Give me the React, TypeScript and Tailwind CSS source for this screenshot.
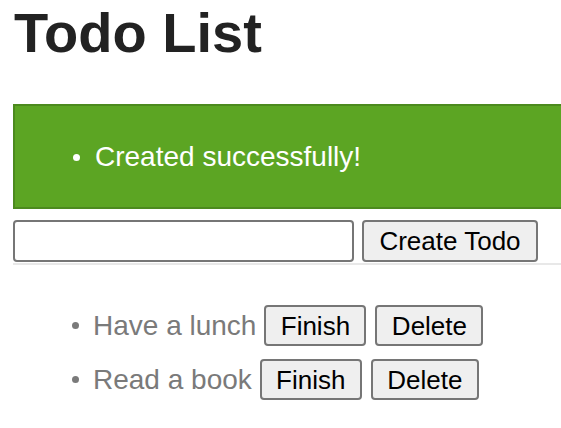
import React, { useState } from 'react';

interface Todo {
  id: number;
  title: string;
}

const initialTodos: Todo[] = [
  { id: 1, title: 'Have a lunch' },
  { id: 2, title: 'Read a book' },
];

const btn =
  'h-[41px] rounded-[4px] border-2 border-[#767676] bg-[#efefef] text-[26px] leading-none text-black flex items-center justify-center';

const App: React.FC = () => {
  const [todos, setTodos] = useState<Todo[]>(initialTodos);
  const [text, setText] = useState('');

  const createTodo = () => {
    if (!text.trim()) return;
    setTodos(t => [...t, { id: Date.now(), title: text }]);
    setText('');
  };

  return (
    <div className="w-[561px] h-[428px] overflow-hidden bg-white px-[13px] font-['Liberation_Sans',Arial,sans-serif]">
      <h1 className="mt-[1px] mb-[39px] pl-px text-[56px] leading-[64px] font-bold text-[#222222]">Todo List</h1>

      {/* flash message, wider than the window */}
      <div className="w-[620px] h-[105px] border-2 border-[#4c8a1e] bg-[#5ca523] pl-[58px] flex items-center">
        <span className="w-[7px] h-[7px] rounded-full bg-white mr-[15px] mt-[1px]" />
        <span className="text-[28px] leading-[32px] text-white">Created successfully!</span>
      </div>

      <div className="mt-[11px] flex items-center gap-[8px]">
        <input
          className="w-[341px] h-[42px] rounded-[4px] border-2 border-[#767676] bg-white px-2 text-[23px] outline-none"
          value={text}
          onChange={e => setText(e.target.value)}
        />
        <button className={btn + ' w-[176px] h-[42px]'} onClick={createTodo}>
          Create Todo
        </button>
      </div>
      <div className="mt-px w-[560px] h-[2px] bg-[#e8e8e8]" />

      <ul className="mt-[40px] flex flex-col gap-[13px]">
        {todos.map(t => (
          <li key={t.id} className="pl-[59px] flex items-center">
            <span className="w-[7px] h-[7px] rounded-full bg-[#7a7a7a] mr-[14px]" />
            <span className="text-[28px] leading-[32px] text-[#7a7a7a] mr-[8px]">{t.title}</span>
            <button className={btn + ' w-[102px] mr-[9px]'}>Finish</button>
            <button className={btn + ' w-[108px]'} onClick={() => setTodos(ts => ts.filter(x => x.id !== t.id))}>
              Delete
            </button>
          </li>
        ))}
      </ul>
    </div>
  );
};

export default App;
